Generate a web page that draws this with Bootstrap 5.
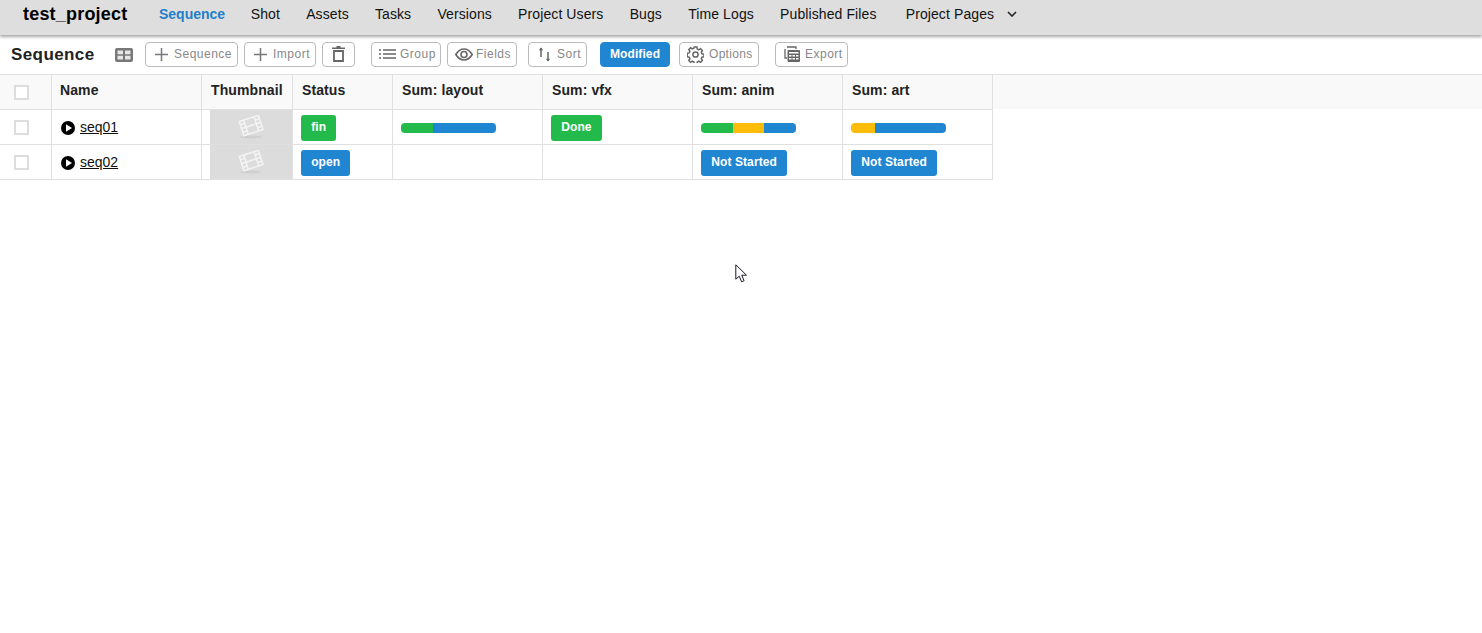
<!DOCTYPE html>
<html lang="en">
<head>
<meta charset="utf-8">
<title>test_project</title>
<link href="https://cdn.jsdelivr.net/npm/bootstrap@5.3.0/dist/css/bootstrap.min.css" rel="stylesheet">
<style>
html,body{height:100%;}
body{font-family:"Liberation Sans",Arial,sans-serif;background:#fff;color:#111;position:relative;overflow:hidden;}
.topbar{height:35px;background:#dedede;box-shadow:0 2px 3px rgba(0,0,0,.35);position:relative;padding-left:23px;padding-bottom:7px;}
.brandname{font-size:18px;font-weight:700;color:#000;letter-spacing:.2px;width:136px;line-height:28px;}
.toplink{font-size:14px;color:#111;text-decoration:none;line-height:28px;margin-right:26.2px;letter-spacing:.1px;}
.toplink.on{color:#1f7fc9;font-weight:700;letter-spacing:0;margin-right:25.6px;}
.toplink.last{margin-left:3px;margin-right:13px;}
.toolbar{height:40px;padding-left:11px;border-bottom:1px solid #e0e0e0;}
.pagetitle{font-size:17px;font-weight:700;color:#222;letter-spacing:.4px;width:104px;}
.tbtn{height:25px;border:1px solid #bbb;border-radius:4px;background:#fff;color:#888;font-size:12px;letter-spacing:.5px;padding:0 0 1px;display:flex;align-items:center;flex:none;}
.tbtn svg{flex:none;}
.tbtn span{line-height:14px;}
.tbtn.act{background:#2086d1;border-color:#2086d1;color:#fff;font-weight:700;letter-spacing:.1px;justify-content:center;}
.layicon{margin-right:12px;flex:none;}
.b-seq{width:93px;padding-left:9px;gap:6px;}
.b-imp{width:72px;margin-left:6px;padding-left:9px;gap:6px;}
.b-del{width:33px;margin-left:6px;justify-content:center;}
.b-grp{width:70px;margin-left:16px;padding-left:7px;gap:4px;}
.b-fld{width:70px;margin-left:6px;padding-left:7px;gap:3px;}
.b-srt{width:59px;margin-left:11px;padding-left:9px;gap:6px;}
.b-mod{width:70px;margin-left:13px;}
.b-opt{width:80px;margin-left:9px;padding-left:7px;gap:5px;letter-spacing:.3px;}
.b-exp{width:73px;margin-left:16px;padding-left:8px;gap:5px;}
.gridtbl{table-layout:fixed;width:100%;border-collapse:collapse;margin:0;}
.gridtbl th,.gridtbl td{padding:0;border-right:1px solid #e0e0e0;border-bottom:1px solid #e0e0e0;vertical-align:middle;font-size:14px;}
.gridtbl th{height:34px;background:#f9f9f9;font-weight:700;color:#222;letter-spacing:.1px;padding-left:9px;padding-bottom:3px;white-space:nowrap;}
.gridtbl th.namehead{padding-left:8px;}
.gridtbl td{height:35px;padding:2px 0 0 8px;}
.gridtbl td.thumbcell{padding:0 0 0 8px;}
.gridtbl .tail{border:0;padding:0;}
.gridtbl th.lead-c{padding:2px 0 0 14px;}
.gridtbl td.lead-c{padding:1px 0 0 14px;}
.col-a{width:51.500px;}.col-n{width:150px;}.col-t{width:91px;}.col-s{width:100px;}.col-w{width:150px;}
.cbx{display:block;width:15px;height:15px;border:2px solid #ddd;background:#fff;}
.namecell{display:flex;align-items:center;gap:5px;padding-left:1px;}
.namecell a{color:#111;font-size:14px;}
.thumbbox{width:82px;height:34px;background:#dcdcdc;display:flex;align-items:center;justify-content:center;}
.chip{display:inline-block;height:26px;line-height:24px;border-radius:3px;color:#fff;font-size:12px;font-weight:700;padding:0 10.2px;text-align:center;letter-spacing:.1px;}
.chip.g{background:#22ba4a;}
.chip.b{background:#2086d1;}
.pbar{display:flex;width:95px;height:10px;border-radius:4px;overflow:hidden;margin-top:1px;}
.seg-g{background:#22ba4a;}
.seg-y{background:#fdbb0a;}
.seg-b{background:#2086d1;}
.mousecursor{position:absolute;left:735px;top:264px;}
</style>
</head>
<body>
<nav class="topbar d-flex align-items-center">
  <div class="brandname">test_project</div>
  <a class="toplink on" href="#">Sequence</a>
  <a class="toplink" href="#">Shot</a>
  <a class="toplink" href="#">Assets</a>
  <a class="toplink" href="#">Tasks</a>
  <a class="toplink" href="#">Versions</a>
  <a class="toplink" href="#">Project Users</a>
  <a class="toplink" href="#">Bugs</a>
  <a class="toplink" href="#">Time Logs</a>
  <a class="toplink" href="#">Published Files</a>
  <a class="toplink last" href="#">Project Pages</a>
  <svg width="10" height="6" viewBox="0 0 10 6"><path d="M1 1l4 4 4-4" fill="none" stroke="#222" stroke-width="1.6"/></svg>
</nav>
<div class="toolbar d-flex align-items-center">
  <div class="pagetitle">Sequence</div>
  <svg class="layicon" width="18" height="14" viewBox="0 0 18 14"><rect width="18" height="14" rx="2" fill="#777"/><path d="M2.500 2.500h5.500v3.700H2.500zM10 2.500h5.500v3.700H10zM2.500 7.800h5.500v3.700H2.500zM10 7.800h5.500v3.700H10z" fill="#e6e6e6"/></svg>
  <button class="tbtn b-seq"><svg width="13" height="13" viewBox="0 0 13 13"><path d="M6.500 0v13M0 6.500h13" stroke="#777" stroke-width="1.500"/></svg><span>Sequence</span></button>
  <button class="tbtn b-imp"><svg width="13" height="13" viewBox="0 0 13 13"><path d="M6.500 0v13M0 6.500h13" stroke="#777" stroke-width="1.500"/></svg><span>Import</span></button>
  <button class="tbtn b-del"><svg width="13" height="16" viewBox="0 0 13 16"><path d="M4.500 .7h4M0 2.300h13" stroke="#666" stroke-width="1.500"/><path d="M2 5h9v10H2z" fill="none" stroke="#666" stroke-width="1.800"/></svg></button>
  <button class="tbtn b-grp"><svg width="17" height="10" viewBox="0 0 17 10"><path d="M0 1h2M0 5h2M0 9h2M4 1h13M4 5h13M4 9h13" stroke="#666" stroke-width="1.500"/></svg><span>Group</span></button>
  <button class="tbtn b-fld"><svg width="18" height="13" viewBox="0 0 18 13"><path d="M.8 6.500C3 3 6 1 9 1s6 2 8.200 5.500C15 10 12 12 9 12S3 10 .8 6.500z" fill="none" stroke="#666" stroke-width="1.600"/><circle cx="9" cy="6.500" r="3" fill="none" stroke="#666" stroke-width="1.600"/></svg><span>Fields</span></button>
  <button class="tbtn b-srt"><svg width="13" height="15" viewBox="0 0 13 15"><path d="M3 1v9M10 5v9" stroke="#666" stroke-width="1.500"/><path d="M.8 3.200L3 .6l2.200 2.600zM7.800 11.800L10 14.400l2.200-2.600z" fill="#666"/></svg><span>Sort</span></button>
  <button class="tbtn act b-mod">Modified</button>
  <button class="tbtn b-opt"><svg width="17" height="17" viewBox="0 0 17 17"><circle cx="8.500" cy="8.500" r="2.600" fill="none" stroke="#666" stroke-width="1.500"/><path d="M7.200 1h2.600l.4 2 1.500.7 1.800-1.100 1.800 1.800-1.100 1.800.7 1.500 2 .4v2.600l-2 .4-.7 1.500 1.100 1.800-1.800 1.800-1.800-1.100-1.500.7-.4 2H7.200l-.4-2-1.500-.7-1.800 1.100-1.800-1.800 1.100-1.800-.7-1.500-2-.4V7.200l2-.4.700-1.500-1.100-1.800 1.800-1.800 1.800 1.100 1.500-.7z" fill="none" stroke="#666" stroke-width="1.500" transform="translate(.1 .1)"/></svg><span>Options</span></button>
  <button class="tbtn b-exp"><svg width="16" height="16" viewBox="0 0 16 16"><path d="M3 1h9v2M1 3v9h2" fill="none" stroke="#666" stroke-width="1.300"/><rect x="3.500" y="4" width="12.500" height="12" rx="1" fill="#666"/><path d="M5 6h9.500v1.500H5zM5 9h2.500v1.500H5zM8.500 9H11v1.500H8.500zM12 9h2.500v1.500H12zM5 12h2.500v1.500H5zM8.500 12H11v1.500H8.500zM12 12h2.500v1.500H12z" fill="#fff"/></svg><span>Export</span></button>
</div>
<table class="gridtbl">
  <colgroup><col class="col-a"><col class="col-n"><col class="col-t"><col class="col-s"><col class="col-w"><col class="col-w"><col class="col-w"><col class="col-w"><col></colgroup>
  <thead><tr>
    <th class="lead-c"><span class="cbx"></span></th><th class="namehead">Name</th><th>Thumbnail</th><th>Status</th><th>Sum: layout</th><th>Sum: vfx</th><th>Sum: anim</th><th>Sum: art</th><th class="tail"></th>
  </tr></thead>
  <tbody>
  <tr>
    <td class="lead-c"><span class="cbx"></span></td>
    <td><div class="namecell"><svg width="14" height="14" viewBox="0 0 14 14"><circle cx="7" cy="7" r="7" fill="#000"/><path d="M5 3.200L11 7l-6 3.800z" fill="#fff"/></svg><a href="#">seq01</a></div></td>
    <td class="thumbcell"><div class="thumbbox"><svg width="26" height="24" viewBox="0 0 26 24"><ellipse cx="13" cy="22" rx="11" ry="1.500" fill="#cfcfcf"/><g transform="rotate(-18 13 10)" fill="none" stroke="#f4f4f4" stroke-width="1.500"><rect x="3" y="3" width="20" height="15"/><path d="M7.500 3v15M18.500 3v15M7.500 10.500h11"/><path d="M3 6.500h4.500M3 10.500h4.500M3 14.500h4.500M18.500 6.500H23M18.500 10.500H23M18.500 14.500H23"/></g></svg></div></td>
    <td><span class="chip g">fin</span></td>
    <td><div class="pbar"><span class="seg-g" style="width:33.400%"></span><span class="seg-b" style="width:66.600%"></span></div></td>
    <td><span class="chip g">Done</span></td>
    <td><div class="pbar"><span class="seg-g" style="width:33.300%"></span><span class="seg-y" style="width:33.300%"></span><span class="seg-b" style="width:33.400%"></span></div></td>
    <td><div class="pbar"><span class="seg-y" style="width:25%"></span><span class="seg-b" style="width:75%"></span></div></td>
    <td class="tail"></td>
  </tr>
  <tr>
    <td class="lead-c"><span class="cbx"></span></td>
    <td><div class="namecell"><svg width="14" height="14" viewBox="0 0 14 14"><circle cx="7" cy="7" r="7" fill="#000"/><path d="M5 3.200L11 7l-6 3.800z" fill="#fff"/></svg><a href="#">seq02</a></div></td>
    <td class="thumbcell"><div class="thumbbox"><svg width="26" height="24" viewBox="0 0 26 24"><ellipse cx="13" cy="22" rx="11" ry="1.500" fill="#cfcfcf"/><g transform="rotate(-18 13 10)" fill="none" stroke="#f4f4f4" stroke-width="1.500"><rect x="3" y="3" width="20" height="15"/><path d="M7.500 3v15M18.500 3v15M7.500 10.500h11"/><path d="M3 6.500h4.500M3 10.500h4.500M3 14.500h4.500M18.500 6.500H23M18.500 10.500H23M18.500 14.500H23"/></g></svg></div></td>
    <td><span class="chip b">open</span></td>
    <td></td>
    <td></td>
    <td><span class="chip b">Not Started</span></td>
    <td><span class="chip b">Not Started</span></td>
    <td class="tail"></td>
  </tr>
  </tbody>
</table>
<svg class="mousecursor" width="14" height="20" viewBox="0 0 14 20"><path d="M.8 .8v14.400l3.400-3 2.400 5.600 2.500-1.100-2.400-5.500h4.800z" fill="#fff" stroke="#1a1a2a" stroke-width="1"/></svg>
<script src="https://cdn.jsdelivr.net/npm/bootstrap@5.3.0/dist/js/bootstrap.bundle.min.js"></script>
</body>
</html>
